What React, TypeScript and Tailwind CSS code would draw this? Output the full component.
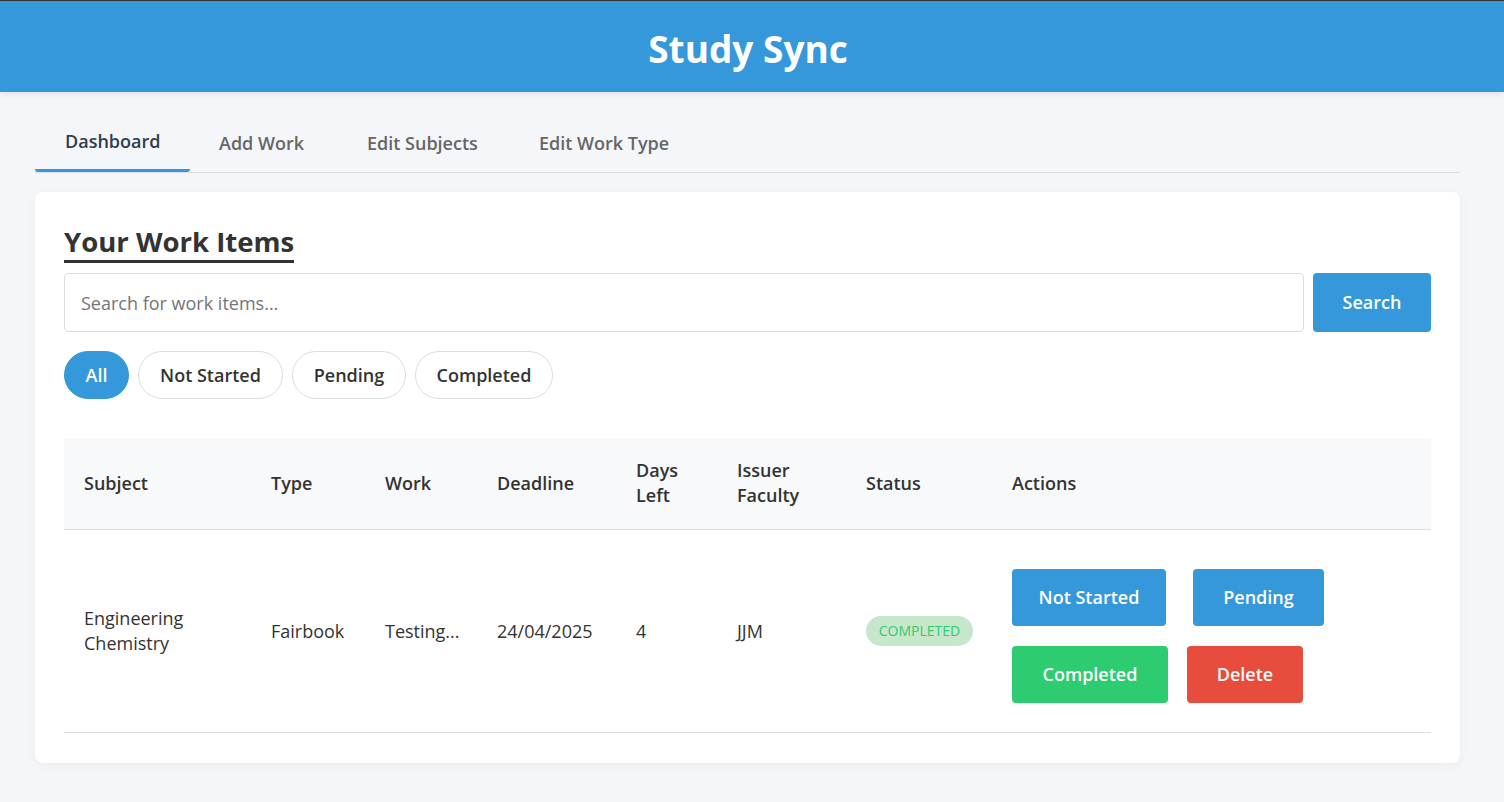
import { useState } from 'react';

// Study Sync dashboard: header bar, tab strip, and the work items card with
// search, status filter pills and the work table.
const font = { fontFamily: '"Open Sans", "Noto Sans", sans-serif' };

const tabs = [
  { label: 'Dashboard', w: 'w-[155px] pl-[30px]' },
  { label: 'Add Work', w: 'w-[148px] pl-[29px]' },
  { label: 'Edit Subjects', w: 'w-[172px] pl-[29px]' },
  { label: 'Edit Work Type', w: 'w-[193px] pl-[29px]' },
];
const filters = [
  { label: 'All', w: 'w-[65px]' },
  { label: 'Not Started', w: 'w-[145px]' },
  { label: 'Pending', w: 'w-[114px]' },
  { label: 'Completed', w: 'w-[138px]' },
];

const thClass = 'px-5 pb-[21px] pt-5 text-left align-middle font-semibold text-[#333]';
const tdClass = 'px-5 py-5 align-middle text-[#333]';
const actionBtn = 'h-[57px] rounded font-semibold text-white';

export default function App() {
  const [tab, setTab] = useState('Dashboard');
  const [filter, setFilter] = useState('All');

  return (
    <div
      className="min-h-[802px] border-t border-[#333] bg-[#f4f6f9] text-[18px] leading-[25px]"
      style={font}
    >
      <header className="flex h-[91px] items-center justify-center bg-[#3498db] pr-2 pt-1 shadow-[0_2px_6px_rgba(0,0,0,0.08)]">
        <h1 className="text-[37px] font-bold leading-none text-white">Study Sync</h1>
      </header>

      <main className="pb-10 pl-[35px] pr-[44px] pt-[22px]">
        <nav className="flex border-b border-[#ddd]">
          {tabs.map((t) => (
            <button
              key={t.label}
              onClick={() => setTab(t.label)}
              className={
                t.label === tab
                  ? `${t.w} rounded-[3px] border-b-[3px] border-[#3498db] pb-[15px] pt-[15px] text-left font-semibold text-[#2c3e50]`
                  : `${t.w} border-b-[3px] border-transparent pb-[13px] pt-[17px] text-left font-semibold text-[#666]`
              }
            >
              {t.label}
            </button>
          ))}
        </nav>

        <section className="mt-[19px] rounded-lg bg-white px-[29px] pb-[30px] pt-[33px] shadow-[0_2px_10px_rgba(0,0,0,0.05)]">
          <h2 className="inline-block border-b-[3px] border-[#333] pb-px text-[27.5px] font-bold leading-[34px] text-[#333]">
            Your Work Items
          </h2>

          <div className="mt-[10px] flex gap-[9px]">
            <input
              type="text"
              placeholder="Search for work items..."
              className="h-[59px] flex-1 rounded border border-[#ddd] px-4 text-[18px] text-[#333] outline-none placeholder:text-[#757575]"
            />
            <button className="h-[59px] w-[118px] rounded bg-[#3498db] font-semibold text-white">
              Search
            </button>
          </div>

          <div className="mt-[19px] flex gap-[9px]">
            {filters.map((f) => (
              <button
                key={f.label}
                onClick={() => setFilter(f.label)}
                className={
                  f.label === filter
                    ? `${f.w} h-[48px] rounded-full border border-[#3498db] bg-[#3498db] text-center font-semibold text-white`
                    : `${f.w} h-[48px] rounded-full border border-[#ddd] bg-white text-center font-semibold text-[#333]`
                }
              >
                {f.label}
              </button>
            ))}
          </div>

          <table className="mt-[39px] w-full table-fixed border-collapse">
            <thead>
              <tr className="border-b border-[#ddd] bg-[#f8f9fa]">
                <th className={`${thClass} w-[187px]`}>Subject</th>
                <th className={`${thClass} w-[114px]`}>Type</th>
                <th className={`${thClass} w-[112px]`}>Work</th>
                <th className={`${thClass} w-[139px]`}>Deadline</th>
                <th className={`${thClass} w-[101px]`}>
                  Days
                  <br />
                  Left
                </th>
                <th className={`${thClass} w-[129px]`}>
                  Issuer
                  <br />
                  Faculty
                </th>
                <th className={`${thClass} w-[146px]`}>Status</th>
                <th className={thClass}>Actions</th>
              </tr>
            </thead>
            <tbody>
              <tr className="border-b border-[#ddd]">
                <td className={tdClass}>
                  Engineering
                  <br />
                  Chemistry
                </td>
                <td className={tdClass}>Fairbook</td>
                <td className={tdClass}>Testing...</td>
                <td className={tdClass}>24/04/2025</td>
                <td className={tdClass}>4</td>
                <td className={tdClass}>JJM</td>
                <td className={tdClass}>
                  <span className="inline-block w-[107px] rounded-full bg-[#c8e6c9] py-[5px] text-center text-[14px] leading-[20px] text-[#2ecc71]">
                    COMPLETED
                  </span>
                </td>
                <td className={tdClass}>
                  <div className="flex flex-col gap-5 pb-[9px] pt-[19px]">
                    <div className="flex gap-[27px]">
                      <button className={`${actionBtn} w-[154px] bg-[#3498db]`}>Not Started</button>
                      <button className={`${actionBtn} w-[131px] bg-[#3498db]`}>Pending</button>
                    </div>
                    <div className="flex gap-[19px]">
                      <button className={`${actionBtn} w-[156px] bg-[#2ecc71]`}>Completed</button>
                      <button className={`${actionBtn} w-[116px] bg-[#e74c3c]`}>Delete</button>
                    </div>
                  </div>
                </td>
              </tr>
            </tbody>
          </table>
        </section>
      </main>
    </div>
  );
}
